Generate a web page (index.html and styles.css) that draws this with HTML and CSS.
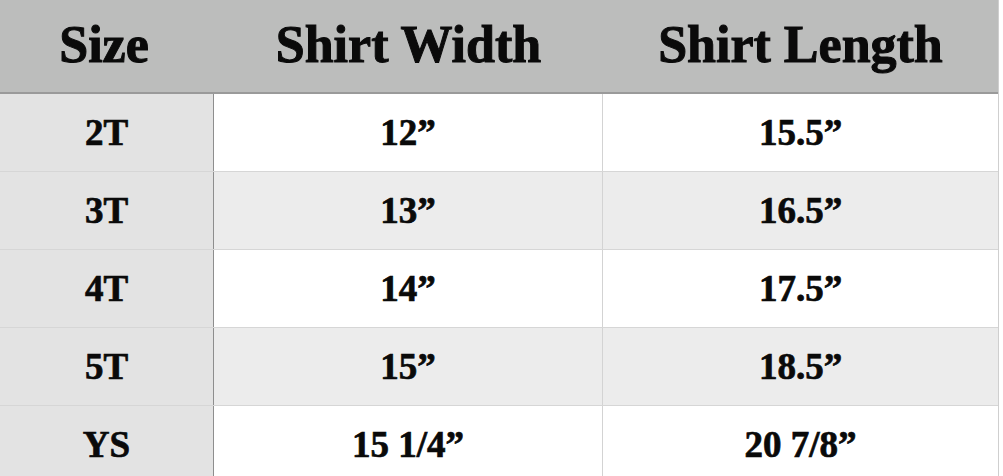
FILE: index.html
```html
<!DOCTYPE html>
<html>
<head>
<meta charset="utf-8">
<link rel="stylesheet" href="styles.css">
</head>
<body>
<div class="chart">
  <div class="row head">
    <div class="cell c1">Size</div>
    <div class="cell c2">Shirt Width</div>
    <div class="cell c3">Shirt Length</div>
  </div>
  <div class="row odd">
    <div class="cell c1">2T</div>
    <div class="cell c2">12”</div>
    <div class="cell c3">15.5”</div>
  </div>
  <div class="row even">
    <div class="cell c1">3T</div>
    <div class="cell c2">13”</div>
    <div class="cell c3">16.5”</div>
  </div>
  <div class="row odd">
    <div class="cell c1">4T</div>
    <div class="cell c2">14”</div>
    <div class="cell c3">17.5”</div>
  </div>
  <div class="row even">
    <div class="cell c1">5T</div>
    <div class="cell c2">15”</div>
    <div class="cell c3">18.5”</div>
  </div>
  <div class="row odd last">
    <div class="cell c1">YS</div>
    <div class="cell c2">15 1/4”</div>
    <div class="cell c3">20 7/8”</div>
  </div>
</div>
</body>
</html>
```
FILE: styles.css
```css
html, body {
  margin: 0;
  padding: 0;
  background: #ffffff;
}
body {
  width: 1003px;
  height: 476px;
  overflow: hidden;
  font-family: "Liberation Serif", "Times New Roman", serif;
  font-weight: 700;
  color: #0a0a0a;
}
.chart {
  display: flex;
  flex-direction: column;
  width: 998px;
  border-right: 1px solid #cfcfcf;
}
.row {
  display: grid;
  grid-template-columns: 214px 389px 1fr;
  height: 77px;
  border-bottom: 1px solid #d6d6d6;
}
.row.head {
  height: 92px;
  background: #bcbdbc;
  border-bottom: 2px solid #9a9a9a;
}
.cell {
  display: flex;
  align-items: center;
  justify-content: center;
  font-size: 37px;
  -webkit-text-stroke: 0.7px #0a0a0a;
}
.head .cell {
  font-size: 52px;
  padding-bottom: 4px;
  -webkit-text-stroke: 1px #0a0a0a;
}
.row .c1 {
  border-right: 1px solid #8e8e8e;
}
.row .c2 {
  border-right: 1px solid #d3d3d3;
}
.head .c1, .head .c2 {
  border-right: none;
}
.head .c1 {
  padding-right: 6px;
}
.row:not(.head) .c1 {
  background: #e3e3e3;
}
.odd .c2, .odd .c3 {
  background: #ffffff;
}
.even .c2, .even .c3 {
  background: #ececec;
}
.last {
  border-bottom: none;
}
```
